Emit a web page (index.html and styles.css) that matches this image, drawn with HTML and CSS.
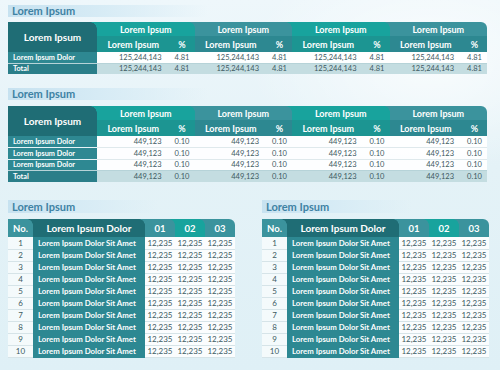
FILE: index.html
```html
<!DOCTYPE html>
<html>
<head>
<meta charset="utf-8">
<link rel="stylesheet" href="styles.css">
</head>
<body>
<div class="page">
  <section class="sec sec-1">
    <div class="title">Lorem Ipsum</div>
    <table class="grp">
      <colgroup>
        <col class="c-label">
        <col class="c-val"><col class="c-pct">
        <col class="c-val"><col class="c-pct">
        <col class="c-val"><col class="c-pct">
        <col class="c-val"><col class="c-pct">
      </colgroup>
      <thead>
        <tr class="h1">
          <th rowspan="2" class="corner tab-dark-to-a">Lorem Ipsum</th>
          <th colspan="2" class="tab-a-to-b">Lorem Ipsum</th>
          <th colspan="2" class="tab-b-to-a">Lorem Ipsum</th>
          <th colspan="2" class="tab-a-to-b">Lorem Ipsum</th>
          <th colspan="2" class="tab-b-end">Lorem Ipsum</th>
        </tr>
        <tr class="h2">
          <th class="sa">Lorem Ipsum</th><th class="sa">%</th>
          <th class="sb">Lorem Ipsum</th><th class="sb">%</th>
          <th class="sa">Lorem Ipsum</th><th class="sa">%</th>
          <th class="sb">Lorem Ipsum</th><th class="sb">%</th>
        </tr>
      </thead>
      <tbody>
        <tr>
          <td class="lbl">Lorem Ipsum Dolor</td>
          <td class="num">125,244,143</td><td class="pct">4.81</td>
          <td class="num">125,244,143</td><td class="pct">4.81</td>
          <td class="num">125,244,143</td><td class="pct">4.81</td>
          <td class="num">125,244,143</td><td class="pct">4.81</td>
        </tr>
        <tr class="total">
          <td class="lbl">Total</td>
          <td class="num">125,244,143</td><td class="pct">4.81</td>
          <td class="num">125,244,143</td><td class="pct">4.81</td>
          <td class="num">125,244,143</td><td class="pct">4.81</td>
          <td class="num">125,244,143</td><td class="pct">4.81</td>
        </tr>
      </tbody>
    </table>
  </section>

  <section class="sec sec-2">
    <div class="title">Lorem Ipsum</div>
    <table class="grp grp-2">
      <colgroup>
        <col class="c-label">
        <col class="c-val"><col class="c-pct">
        <col class="c-val"><col class="c-pct">
        <col class="c-val"><col class="c-pct">
        <col class="c-val"><col class="c-pct">
      </colgroup>
      <thead>
        <tr class="h1">
          <th rowspan="2" class="corner tab-dark-to-a">Lorem Ipsum</th>
          <th colspan="2" class="tab-a-to-b">Lorem Ipsum</th>
          <th colspan="2" class="tab-b-to-a">Lorem Ipsum</th>
          <th colspan="2" class="tab-a-to-b">Lorem Ipsum</th>
          <th colspan="2" class="tab-b-end">Lorem Ipsum</th>
        </tr>
        <tr class="h2">
          <th class="sa">Lorem Ipsum</th><th class="sa">%</th>
          <th class="sb">Lorem Ipsum</th><th class="sb">%</th>
          <th class="sa">Lorem Ipsum</th><th class="sa">%</th>
          <th class="sb">Lorem Ipsum</th><th class="sb">%</th>
        </tr>
      </thead>
      <tbody>
        <tr>
          <td class="lbl">Lorem Ipsum Dolor</td>
          <td class="num">449,123</td><td class="pct">0.10</td>
          <td class="num">449,123</td><td class="pct">0.10</td>
          <td class="num">449,123</td><td class="pct">0.10</td>
          <td class="num">449,123</td><td class="pct">0.10</td>
        </tr>
        <tr>
          <td class="lbl">Lorem Ipsum Dolor</td>
          <td class="num">449,123</td><td class="pct">0.10</td>
          <td class="num">449,123</td><td class="pct">0.10</td>
          <td class="num">449,123</td><td class="pct">0.10</td>
          <td class="num">449,123</td><td class="pct">0.10</td>
        </tr>
        <tr>
          <td class="lbl">Lorem Ipsum Dolor</td>
          <td class="num">449,123</td><td class="pct">0.10</td>
          <td class="num">449,123</td><td class="pct">0.10</td>
          <td class="num">449,123</td><td class="pct">0.10</td>
          <td class="num">449,123</td><td class="pct">0.10</td>
        </tr>
        <tr class="total">
          <td class="lbl">Total</td>
          <td class="num">449,123</td><td class="pct">0.10</td>
          <td class="num">449,123</td><td class="pct">0.10</td>
          <td class="num">449,123</td><td class="pct">0.10</td>
          <td class="num">449,123</td><td class="pct">0.10</td>
        </tr>
      </tbody>
    </table>
  </section>

  <div class="pair">
    <section class="sec sec-list">
      <div class="title title-short">Lorem Ipsum</div>
      <table class="list">
        <colgroup>
          <col class="c-no"><col class="c-name"><col class="c-n"><col class="c-n"><col class="c-n">
        </colgroup>
        <thead>
          <tr>
            <th class="tab-b-to-dark">No.</th>
            <th class="tab-dark-to-b name-h">Lorem Ipsum Dolor</th>
            <th class="tab-b-to-a">01</th>
            <th class="tab-a-to-b">02</th>
            <th class="tab-b-end">03</th>
          </tr>
        </thead>
        <tbody>
          <tr><td class="no">1</td><td class="name">Lorem Ipsum Dolor Sit Amet</td><td>12,235</td><td>12,235</td><td>12,235</td></tr>
          <tr><td class="no">2</td><td class="name">Lorem Ipsum Dolor Sit Amet</td><td>12,235</td><td>12,235</td><td>12,235</td></tr>
          <tr><td class="no">3</td><td class="name">Lorem Ipsum Dolor Sit Amet</td><td>12,235</td><td>12,235</td><td>12,235</td></tr>
          <tr><td class="no">4</td><td class="name">Lorem Ipsum Dolor Sit Amet</td><td>12,235</td><td>12,235</td><td>12,235</td></tr>
          <tr><td class="no">5</td><td class="name">Lorem Ipsum Dolor Sit Amet</td><td>12,235</td><td>12,235</td><td>12,235</td></tr>
          <tr><td class="no">6</td><td class="name">Lorem Ipsum Dolor Sit Amet</td><td>12,235</td><td>12,235</td><td>12,235</td></tr>
          <tr><td class="no">7</td><td class="name">Lorem Ipsum Dolor Sit Amet</td><td>12,235</td><td>12,235</td><td>12,235</td></tr>
          <tr><td class="no">8</td><td class="name">Lorem Ipsum Dolor Sit Amet</td><td>12,235</td><td>12,235</td><td>12,235</td></tr>
          <tr><td class="no">9</td><td class="name">Lorem Ipsum Dolor Sit Amet</td><td>12,235</td><td>12,235</td><td>12,235</td></tr>
          <tr><td class="no">10</td><td class="name">Lorem Ipsum Dolor Sit Amet</td><td>12,235</td><td>12,235</td><td>12,235</td></tr>
        </tbody>
      </table>
    </section>

    <section class="sec sec-list">
      <div class="title title-short">Lorem Ipsum</div>
      <table class="list">
        <colgroup>
          <col class="c-no"><col class="c-name"><col class="c-n"><col class="c-n"><col class="c-n">
        </colgroup>
        <thead>
          <tr>
            <th class="tab-b-to-dark">No.</th>
            <th class="tab-dark-to-b name-h">Lorem Ipsum Dolor</th>
            <th class="tab-b-to-a">01</th>
            <th class="tab-a-to-b">02</th>
            <th class="tab-b-end">03</th>
          </tr>
        </thead>
        <tbody>
          <tr><td class="no">1</td><td class="name">Lorem Ipsum Dolor Sit Amet</td><td>12,235</td><td>12,235</td><td>12,235</td></tr>
          <tr><td class="no">2</td><td class="name">Lorem Ipsum Dolor Sit Amet</td><td>12,235</td><td>12,235</td><td>12,235</td></tr>
          <tr><td class="no">3</td><td class="name">Lorem Ipsum Dolor Sit Amet</td><td>12,235</td><td>12,235</td><td>12,235</td></tr>
          <tr><td class="no">4</td><td class="name">Lorem Ipsum Dolor Sit Amet</td><td>12,235</td><td>12,235</td><td>12,235</td></tr>
          <tr><td class="no">5</td><td class="name">Lorem Ipsum Dolor Sit Amet</td><td>12,235</td><td>12,235</td><td>12,235</td></tr>
          <tr><td class="no">6</td><td class="name">Lorem Ipsum Dolor Sit Amet</td><td>12,235</td><td>12,235</td><td>12,235</td></tr>
          <tr><td class="no">7</td><td class="name">Lorem Ipsum Dolor Sit Amet</td><td>12,235</td><td>12,235</td><td>12,235</td></tr>
          <tr><td class="no">8</td><td class="name">Lorem Ipsum Dolor Sit Amet</td><td>12,235</td><td>12,235</td><td>12,235</td></tr>
          <tr><td class="no">9</td><td class="name">Lorem Ipsum Dolor Sit Amet</td><td>12,235</td><td>12,235</td><td>12,235</td></tr>
          <tr><td class="no">10</td><td class="name">Lorem Ipsum Dolor Sit Amet</td><td>12,235</td><td>12,235</td><td>12,235</td></tr>
        </tbody>
      </table>
    </section>
  </div>
</div>
</body>
</html>
```
FILE: styles.css
```css
:root {
  --dark: #1f6d75;
  --ta: #18a39d;
  --tb: #3b939d;
  --sa: #1c9592;
  --sb: #2d8891;
  --lbl: #2e8892;
  --lbl-total: #2a7e89;
  --total: #c4dde1;
  --ink: #3d5a62;
}

* { box-sizing: border-box; }

html, body {
  margin: 0;
  padding: 0;
}

body {
  width: 500px;
  height: 370px;
  overflow: hidden;
  font-family: Lato, "Open Sans", sans-serif;
  background:
    radial-gradient(ellipse 260px 160px at 430px 60px, rgba(255,255,255,0.7), rgba(255,255,255,0) 70%),
    linear-gradient(180deg, #eef7fb 0%, #e4f2f7 45%, #dff0f6 100%);
  color: var(--ink);
}

.page {
  padding: 5px 0 0 8px;
  display: flex;
  flex-direction: column;
}

.title {
  height: 12px;
  width: 200px;
  padding-left: 4px;
  font-size: 11px;
  line-height: 12px;
  font-weight: 700;
  color: #3e82a4;
  background: linear-gradient(90deg, #c7e2f0 0%, #d6ebf5 45%, rgba(220,238,247,0) 100%);
  margin-bottom: 5px;
}

.title-short { width: 150px; height: 13px; line-height: 13px; margin-bottom: 6px; }

.sec-2 { margin-top: 14px; }
.sec-2 .title { margin-bottom: 6px; }

table {
  border-collapse: collapse;
  border-spacing: 0;
  table-layout: fixed;
}

th, td { padding: 0; white-space: nowrap; overflow: hidden; }

/* tab headers: own colour, with the rounded top-right corner drawn over the next tab's colour */
.tab-dark-to-a {
  background: radial-gradient(circle at 0 100%, var(--dark) 6.5px, var(--ta) 7px) top right / 7px 7px no-repeat, var(--dark);
}
.tab-dark-to-b {
  background: radial-gradient(circle at 0 100%, var(--dark) 5.5px, var(--tb) 6px) top right / 6px 6px no-repeat, var(--dark);
}
.tab-a-to-b {
  background: radial-gradient(circle at 0 100%, var(--ta) 5.5px, var(--tb) 6px) top right / 6px 6px no-repeat, var(--ta);
}
.tab-b-to-a {
  background: radial-gradient(circle at 0 100%, var(--tb) 5.5px, var(--ta) 6px) top right / 6px 6px no-repeat, var(--tb);
}
.tab-b-to-dark {
  background: radial-gradient(circle at 0 100%, var(--tb) 5.5px, var(--dark) 6px) top right / 6px 6px no-repeat, var(--tb);
}
.tab-b-end {
  background: var(--tb);
  border-top-right-radius: 6px;
}

/* group tables */
.grp { width: 479px; }
.c-label { width: 89px; }
.c-val { width: 72.5px; }
.c-pct { width: 25px; }

.grp th {
  color: #ffffff;
  font-weight: 700;
  font-size: 9px;
  text-align: center;
}
.grp .h1 th { height: 14px; }
.grp .h2 th { height: 16px; }
.grp th.corner { font-size: 10px; }
.grp .sa { background: var(--sa); }
.grp .sb { background: var(--sb); }

.grp td {
  height: 11px;
  font-size: 7.5px;
  color: var(--ink);
  background: rgba(255,255,255,0.92);
  border-top: 1px solid #dfe9ec;
}
.grp-2 td { height: 11.5px; }
.grp td.lbl {
  background: var(--lbl);
  color: #ffffff;
  font-weight: 700;
  font-size: 7.3px;
  padding-left: 5px;
  border-top-color: rgba(255,255,255,0.08);
}
.grp td.num { text-align: right; padding-right: 8px; }
.grp td.pct { text-align: center; }
.grp tbody tr:first-child td { border-top: none; }
.grp .total td { background: var(--total); border-top-color: #b6d3d8; }
.grp .total td.lbl { background: var(--lbl-total); }

/* list tables */
.pair {
  margin-top: 18px;
  display: flex;
  gap: 27px;
}

.list { width: 227px; }
.c-no { width: 25px; }
.c-name { width: 112px; }
.c-n { width: 30px; }

.list th {
  height: 18px;
  color: #ffffff;
  font-weight: 700;
  font-size: 9.5px;
  text-align: center;
}
.list th.name-h { font-size: 10px; }

.list td {
  height: 12px;
  font-size: 8px;
  text-align: center;
  color: var(--ink);
  background: rgba(255,255,255,0.85);
  border-bottom: 1px solid #d6e4e8;
}
.list td.no { background: rgba(246,251,252,0.9); }
.list td.name {
  text-align: left;
  padding-left: 5px;
  background: #2d8892;
  color: #ffffff;
  font-weight: 700;
  font-size: 7.8px;
  border-bottom-color: #2d8892;
}
```
